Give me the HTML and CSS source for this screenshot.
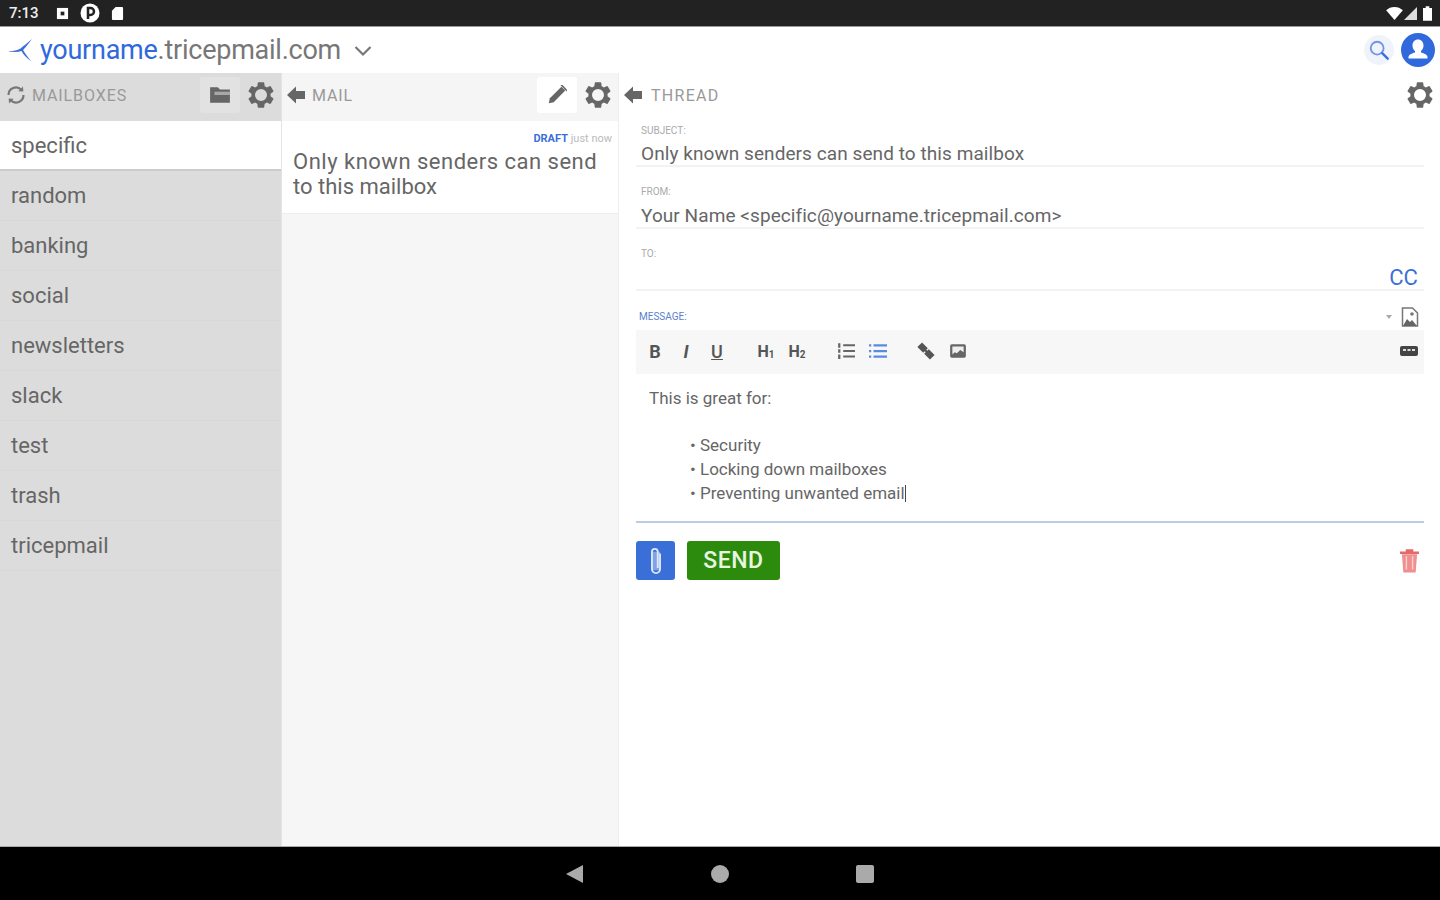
FILE: index.html
```html
<!DOCTYPE html>
<html lang="en">
<head>
<meta charset="utf-8">
<title>Tricepmail</title>
<link rel="stylesheet" href="styles.css">
</head>
<body>
<svg class="defs" width="0" height="0" aria-hidden="true">
  <defs>
    <symbol id="gear" viewBox="0 0 24 24"><path fill-rule="evenodd" d="M19.14 12.94c.04-.3.06-.61.06-.94s-.02-.64-.07-.94l2.03-1.58a.49.49 0 0 0 .12-.61l-1.92-3.32a.49.49 0 0 0-.59-.22l-2.39.96a7 7 0 0 0-1.62-.94l-.36-2.54a.48.48 0 0 0-.48-.41h-3.84a.48.48 0 0 0-.47.41l-.36 2.54c-.59.24-1.13.57-1.62.94l-2.39-.96a.49.49 0 0 0-.59.22L2.74 8.87a.48.48 0 0 0 .12.61l2.03 1.58c-.05.3-.09.63-.09.94s.02.64.07.94l-2.03 1.58a.49.49 0 0 0-.12.61l1.92 3.32c.12.22.37.29.59.22l2.39-.96c.5.38 1.03.7 1.62.94l.36 2.54c.05.24.24.41.48.41h3.84c.24 0 .44-.17.47-.41l.36-2.54a7 7 0 0 0 1.62-.94l2.39.96c.22.08.47 0 .59-.22l1.92-3.32a.48.48 0 0 0-.12-.61zM12 16.500a4.500 4.500 0 1 1 0-9 4.500 4.500 0 0 1 0 9z"/></symbol>
    <symbol id="back" viewBox="0 0 20 20"><path d="M10 1.500 1 10l9 8.500V14h9V6h-9z"/></symbol>
  </defs>
</svg>
<div class="screen">
  <header class="status">
    <div class="status-left">
      <span class="clock">7:13</span>
      <svg class="st-ic" viewBox="0 0 14 14"><path fill="#fff" d="M1 1h12v12H1z"/><path fill="#222" d="M5 5h4v4H5z"/></svg>
      <svg class="st-ic st-round" viewBox="0 0 20 20"><circle cx="10" cy="10" r="9.500" fill="#fff"/><path fill="none" stroke="#222" stroke-width="2.500" d="M8 16V5h2.500a3 3 0 0 1 0 7H8"/></svg>
      <svg class="st-ic" viewBox="0 0 14 14"><path fill="#fff" d="M5 0h7a1 1 0 0 1 1 1v12a1 1 0 0 1-1 1H2a1 1 0 0 1-1-1V4z"/></svg>
    </div>
    <div class="status-right">
      <svg class="st-wifi" viewBox="0 0 18 14"><path fill="#fff" d="M9 14 0 3.500C2.500 1.300 5.500 0 9 0s6.500 1.300 9 3.500z"/></svg>
      <svg class="st-signal" viewBox="0 0 14 14"><path fill="#ddd" d="M14 0v14H0z"/></svg>
      <svg class="st-batt" viewBox="0 0 10 16"><path fill="#fff" d="M3 0h4v2h3v14H0V2h3z"/></svg>
    </div>
  </header>

  <div class="topbar">
    <svg class="logo" viewBox="0 0 22 24"><path fill="#3b6fd8" d="M0 12.500c4 0 8-.5 11-2.500 3-2 6-5 11-9-3 4-5.500 7.500-8.500 10.500 2 3.500 4.500 7 8 11-4.500-3-7.500-6-9.500-10-3 1-7 1-12 .5z"/></svg>
    <div class="domain"><span class="domain-user">yourname</span>.tricepmail.com</div>
    <svg class="chev" viewBox="0 0 18 12"><path fill="none" stroke="#777" stroke-width="2.200" d="M1.500 2 9 9.500 16.500 2"/></svg>
    <div class="top-actions">
      <div class="search-btn">
        <svg viewBox="0 0 24 24"><circle cx="10" cy="10" r="7" fill="none" stroke="#6d97e4" stroke-width="2"/><path stroke="#3b6fd8" stroke-width="2.600" stroke-linecap="round" d="m15.500 15.500 6 6"/></svg>
      </div>
      <svg class="avatar" viewBox="0 0 34 34"><circle cx="17" cy="17" r="17" fill="#2f69dc"/><path fill="#fff" d="M17 6.500c3.300 0 5.500 2.600 5.500 6 0 2.600-1.100 4.500-2.500 5.500v1.500c3 .9 6.500 2.200 6.500 4.500v1.500h-19V24c0-2.300 3.500-3.600 6.500-4.500V18c-1.400-1-2.500-2.900-2.500-5.500 0-3.400 2.200-6 5.500-6z"/></svg>
    </div>
  </div>

  <main class="columns">
    <section class="col col-boxes">
      <div class="col-head">
        <svg class="refresh" viewBox="0 0 20 20"><path fill="none" stroke="#777" stroke-width="2.200" d="M2.500 10a7.500 7.500 0 0 1 12.800-5.300M17.500 10a7.500 7.500 0 0 1-12.800 5.300"/><path fill="#777" d="m17 1.500.3 5-5-.3zM3 18.500l-.3-5 5 .3z"/></svg>
        <span class="head-label">MAILBOXES</span>
        <div class="head-actions">
          <div class="head-btn head-btn-boxes">
            <svg class="ic-20" viewBox="0 0 20 20"><path fill="#666" d="M1 3h7l2 2h9v12H1z"/><path fill="#a8a8a8" d="M5 7h14v3H5z"/></svg>
          </div>
          <svg class="gear"><use href="#gear"/></svg>
        </div>
      </div>
      <ul class="boxes">
        <li class="box box-active">specific</li>
        <li class="box">random</li>
        <li class="box">banking</li>
        <li class="box">social</li>
        <li class="box">newsletters</li>
        <li class="box">slack</li>
        <li class="box">test</li>
        <li class="box">trash</li>
        <li class="box">tricepmail</li>
      </ul>
    </section>

    <section class="col col-mail">
      <div class="col-head">
        <svg class="back"><use href="#back"/></svg>
        <span class="head-label">MAIL</span>
        <div class="head-actions">
          <div class="head-btn head-btn-mail">
            <svg class="ic-20" viewBox="0 0 20 20"><path fill="#666" d="M14 2.500l3.500 3.500L7 16.500 2.500 17.500l1-4.500z"/><path fill="#666" d="M13 1h2l4 4v2z"/></svg>
          </div>
          <svg class="gear"><use href="#gear"/></svg>
        </div>
      </div>
      <article class="mail-card">
        <div class="mail-meta"><b class="draft">DRAFT</b> just now</div>
        <div class="mail-title">Only known senders can send to this mailbox</div>
      </article>
    </section>

    <section class="col col-thread">
      <div class="col-head">
        <svg class="back"><use href="#back"/></svg>
        <span class="head-label">THREAD</span>
        <div class="head-actions">
          <svg class="gear"><use href="#gear"/></svg>
        </div>
      </div>
      <div class="form">
        <div class="field field-first">
          <div class="label">SUBJECT:</div>
          <div class="value">Only known senders can send to this mailbox</div>
        </div>
        <div class="field">
          <div class="label">FROM:</div>
          <div class="value">Your Name &lt;specific@yourname.tricepmail.com&gt;</div>
        </div>
        <div class="field">
          <div class="label">TO:</div>
          <div class="value value-cc"><span class="cc">CC</span></div>
        </div>
        <div class="msg-head">
          <span class="label label-msg">MESSAGE:</span>
          <span class="caret"></span>
          <svg class="file-ic" viewBox="0 0 18 20"><path fill="none" stroke="#777" stroke-width="1.500" d="M1.500 1h10l5 5v13h-15z"/><path fill="#666" d="M2 19l4-7 3 3 2-2 5 6z"/><circle cx="11" cy="7" r="1.800" fill="#777"/></svg>
        </div>
        <div class="toolbar">
          <div class="tools">
            <span class="tool tool-b">B</span>
            <span class="tool tool-i">I</span>
            <span class="tool tool-u">U</span>
          </div>
          <div class="tools tools-h">
            <span class="tool tool-h">H<sub>1</sub></span>
            <span class="tool tool-h">H<sub>2</sub></span>
          </div>
          <div class="tools tools-svg">
            <svg class="tool-svg" viewBox="0 0 16 16"><path fill="#666" d="M5.500 2H16v1.800H5.500zM5.500 7H16v1.800H5.500zM5.500 12H16v1.800H5.500zM1 1h2v4H1zM1 6.500h2v3H1zM1 11h2v4H1z"/></svg>
            <svg class="tool-svg" viewBox="0 0 16 16"><path fill="#5b8be0" d="M4 2h12v2H4zM4 7h12v2H4zM4 12h12v2H4zM0 2h2v2H0zM0 7h2v2H0zM0 12h2v2H0z"/></svg>
          </div>
          <div class="tools tools-svg">
            <svg class="tool-svg" viewBox="0 0 16 16"><path fill="none" stroke="#555" stroke-width="3" d="M2.500 4.500l2-2 3 3-2 2zM8.500 10.500l2-2 3 3-2 2z"/><path stroke="#555" stroke-width="2" d="m6 6 4 4"/></svg>
            <svg class="tool-svg" viewBox="0 0 16 16"><rect x="1" y="2" width="14" height="12" rx="1.500" fill="#666"/><path fill="#eee" d="M3 4h10v5l-3-2-3 3-2-1-2 2z"/></svg>
          </div>
          <svg class="kbd-ic" viewBox="0 0 18 10"><rect width="18" height="10" rx="2" fill="#444"/><path fill="#ddd" d="M3 3h3v2H3zM7.500 3h3v2h-3zM12 3h3v2h-3z"/></svg>
        </div>
        <div class="editor">
          <p class="editor-line">This is great for:</p>
          <ul class="editor-list">
            <li>Security</li>
            <li>Locking down mailboxes</li>
            <li>Preventing unwanted email<span class="cursor"></span></li>
          </ul>
        </div>
        <div class="actions">
          <button class="attach" type="button">
            <svg viewBox="2 0 10 26"><path fill="#d5e2fb" opacity=".45" d="M3.500 5h7v16h-7z"/><path fill="none" stroke="#dfe9fc" stroke-width="1.600" d="M10.500 6.500V20a3.500 3.500 0 0 1-7 0V5a2.500 2.500 0 0 1 5 0v14"/></svg>
          </button>
          <button class="send" type="button">SEND</button>
          <svg class="trash" viewBox="0 0 20 26"><path fill="#f08f8f" d="M2 6h16l-1.500 19h-13z"/><path fill="#e46a6a" d="M0 3h20v2.500H0zM6 .500h8V3H6z"/><path fill="#fbd0d0" d="M6 8h1.500v14H6zM12.500 8H14v14h-1.500z"/></svg>
        </div>
      </div>
    </section>
  </main>

  <nav class="navbar">
    <svg class="nav-ic" viewBox="0 0 20 20"><path fill="#aaa" d="M18 1v18L1 10z"/></svg>
    <svg class="nav-ic" viewBox="0 0 20 20"><circle cx="10" cy="10" r="9" fill="#aaa"/></svg>
    <svg class="nav-ic" viewBox="0 0 20 20"><rect x="1" y="1" width="18" height="18" rx="2" fill="#aaa"/></svg>
  </nav>
</div>
</body>
</html>
```
FILE: styles.css
```css
* { box-sizing: border-box; }
html, body { margin: 0; padding: 0; }
body { font-family: Roboto, "Liberation Sans", sans-serif; color: #666; background: #fff; }
.defs { position: absolute; }
.screen { width: 1440px; height: 900px; display: flex; flex-direction: column; overflow: hidden; }

.status { height: 27px; flex: none; background: #222; border-bottom: 1px solid #999; display: flex; align-items: center; justify-content: space-between; padding: 0 8px 0 9px; }
.status-left, .status-right { display: flex; align-items: center; }
.clock { color: #eee; font-size: 15px; font-weight: 500; width: 47px; }
.st-ic { width: 13px; height: 13px; margin-right: 11px; }
.st-round { width: 20px; height: 20px; }
.st-wifi { width: 19px; height: 13px; }
.st-signal { width: 13px; height: 13px; margin-right: 6px; }
.st-batt { width: 9px; height: 15px; }

.topbar { height: 46px; flex: none; background: #fff; display: flex; align-items: center; padding: 0 5px 0 9px; }
.logo { width: 23px; height: 25px; margin-right: 8px; }
.domain { font-size: 27px; letter-spacing: -.25px; color: #777; }
.domain-user { color: #2f69dc; }
.chev { width: 18px; height: 12px; margin-left: 13px; margin-top: 2px; }
.top-actions { margin-left: auto; display: flex; align-items: center; gap: 7px; }
.search-btn { width: 30px; height: 30px; border-radius: 50%; background: #f0f3fb; display: flex; align-items: center; justify-content: center; }
.search-btn svg { width: 22px; height: 22px; }
.avatar { width: 34px; height: 34px; }

.columns { flex: 1; display: flex; min-height: 0; }
.col { display: flex; flex-direction: column; }
.col-boxes { width: 282px; background: #dcdcdc; border-right: 1px solid #e4e4e4; }
.col-mail { width: 337px; background: #f6f6f6; border-right: 1px solid #eee; }
.col-thread { flex: 1; background: #fff; }

.col-head { height: 48px; flex: none; display: flex; align-items: center; padding: 0 4px 4px 6px; }
.col-mail .col-head { background: #f5f5f5; }
.col-thread .col-head { height: 46px; padding-bottom: 2px; }
.head-label { font-size: 16px; color: #999; margin-left: 6px; letter-spacing: .9px; }
.col-thread .head-label { margin-left: 8px; letter-spacing: 1.3px; }
.head-actions { margin-left: auto; display: flex; align-items: center; gap: 5px; }
.head-btn { width: 40px; height: 36px; display: flex; align-items: center; justify-content: center; border-radius: 3px; }
.head-btn-boxes { background: #e2e2e2; }
.head-btn-mail { background: #fff; }
.ic-20 { width: 22px; height: 22px; }
.gear { width: 32px; height: 32px; fill: #666; }
.back { width: 20px; height: 20px; fill: #666; margin-left: -2px; }
.refresh { width: 20px; height: 20px; }

.boxes { list-style: none; margin: 0; padding: 0; }
.box { height: 50px; padding: 0 11px; display: flex; align-items: center; font-size: 22px; color: #666; border-bottom: 1px solid #d8d8d8; }
.box-active { background: #fff; border-bottom: 2px solid #ccc; }

.mail-card { background: #fff; height: 93px; padding: 11px 6px 0 11px; border-bottom: 1px solid #eee; }
.mail-meta { text-align: right; font-size: 11px; color: #bbb; line-height: 13px; }
.draft { color: #3b6fd8; }
.mail-title { font-size: 22px; line-height: 25px; color: #666; margin-top: 4px; }
.mail-title::first-line { letter-spacing: .5px; }

.form { padding: 0 16px 0 17px; display: flex; flex-direction: column; }
.field { height: 62px; border-bottom: 2px solid #f3f3f3; padding: 19px 0 0 5px; }
.field-first { height: 48px; padding-top: 6px; }
.label { font-size: 10px; line-height: 12px; color: #aaa; height: 18px; }
.field-first .label { height: 17px; }
.value { font-size: 19px; line-height: 24px; color: #666; letter-spacing: .07px; height: 24px; }
.value-cc { text-align: right; padding-right: 6px; }
.cc { font-size: 22px; color: #3b6fd8; }

.msg-head { height: 39px; display: flex; align-items: center; padding: 12px 5px 0 3px; }
.label-msg { color: #5b7fcc; height: auto; }
.caret { margin-left: auto; margin-right: 9px; border: 3.500px solid transparent; border-top: 4px solid #aaa; border-bottom: 0; }
.file-ic { width: 18px; height: 20px; }
.toolbar { height: 44px; background: #f7f7f7; display: flex; align-items: center; padding: 0 6px 2px 10px; }
.tools { display: flex; align-items: center; gap: 13px; margin-right: 30px; }
.tools-h { gap: 11px; }
.tools-svg { gap: 14px; }
.tool { font-size: 18px; color: #555; width: 18px; text-align: center; }
.tool-b { font-weight: 700; }
.tool-i { font-style: italic; font-weight: 700; }
.tool-u { text-decoration: underline; font-weight: 500; }
.tool-h { font-weight: 700; font-size: 16px; width: 20px; }
.tool-h sub { font-size: 10px; vertical-align: -1px; }
.tool-svg { width: 18px; height: 18px; }
.kbd-ic { width: 18px; height: 10px; margin-left: auto; }

.editor { height: 149px; border-bottom: 2px solid #bccbe6; padding: 12px 13px; font-size: 17px; color: #666; }
.editor-line { margin: 0; line-height: 24px; }
.editor-list { margin: 23px 0 0; padding: 0 0 0 51px; line-height: 24px; list-style-type: "• "; }
.cursor { display: inline-block; width: 1px; height: 17px; background: #444; vertical-align: -3px; }

.actions { display: flex; align-items: center; gap: 12px; padding: 18px 5px 0 0; }
.attach { width: 39px; height: 39px; padding: 0; border: 0; border-radius: 3px; background: #3b6fd8; display: flex; align-items: center; justify-content: center; }
.attach svg { width: 12px; height: 30px; }
.send { width: 93px; height: 39px; padding: 0; border: 0; border-radius: 3px; background: #2c8a0c; color: #e8f5e0; font: 500 23px Roboto, sans-serif; letter-spacing: .5px; }
.trash { width: 19px; height: 26px; margin-left: auto; }

.navbar { height: 54px; flex: none; background: #000; display: flex; align-items: center; justify-content: center; gap: 125px; border-top: 1px solid #aaa; }
.nav-ic { width: 20px; height: 20px; }
```
